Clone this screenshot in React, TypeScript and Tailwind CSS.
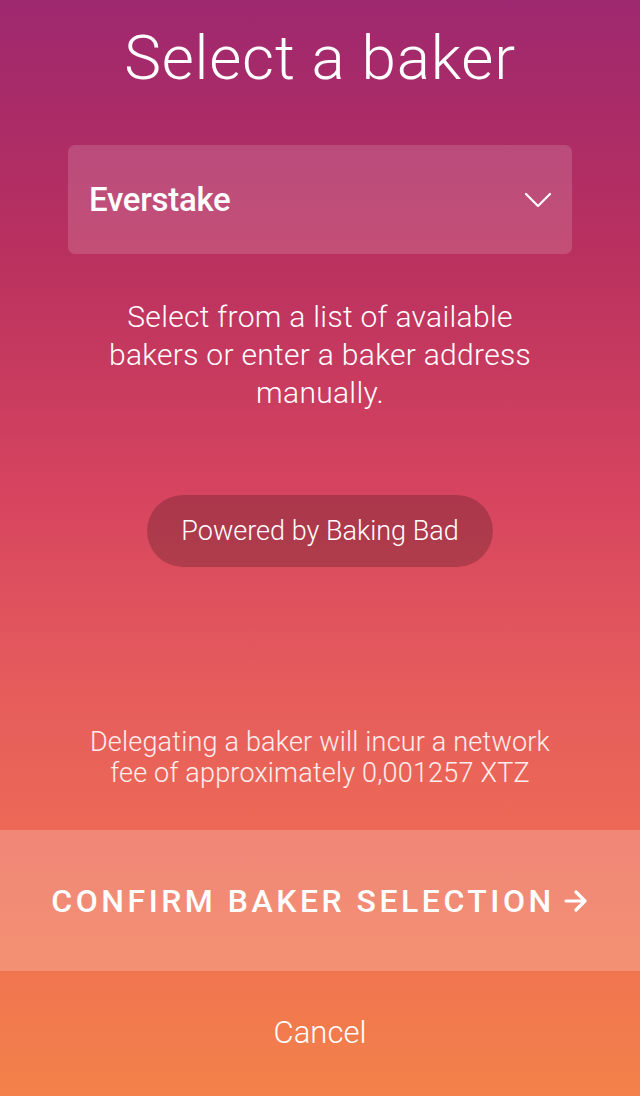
import React from "react";

export default function App() {
  return (
    <div
      className="w-[640px] h-[1096px] flex flex-col text-white bg-[linear-gradient(180deg,#9e286f_0%,#b8305f_22%,#d6445f_45%,#e55b5c_62%,#ee6b55_78%,#f3814a_100%)]"
      style={{ fontFamily: "Roboto, 'Noto Sans', sans-serif" }}
    >
      <h1 className="mt-[22px] text-center text-[62px] leading-[72px] font-light tracking-[0.8px]">
        Select a baker
      </h1>
      <div className="mt-[51px] mx-[68px] h-[109px] rounded-[7px] bg-white/15 flex items-center justify-between pl-[21px] pr-[20px]">
        <span className="text-[33px] font-medium tracking-[-0.3px]">Everstake</span>
        <svg width="28" height="18" viewBox="0 0 28 18" fill="none">
          <path d="M2 3l12 12 12-12" stroke="white" strokeWidth="2.2" strokeLinecap="round" strokeLinejoin="round" />
        </svg>
      </div>
      <p className="mt-[44px] text-center text-[30px] leading-[38px] font-light tracking-[0.3px]">
        Select from a list of available
        <br />
        bakers or enter a baker address
        <br />
        manually.
      </p>
      <div className="mt-[83px] flex justify-center">
        <div className="w-[346px] h-[72px] rounded-full bg-black/20 flex items-center justify-center text-[27px] font-light">
          Powered by Baking Bad
        </div>
      </div>
      <p className="mt-[160px] text-center text-[27px] leading-[31px] font-light text-white/90 tracking-[0.2px]">
        Delegating a baker will incur a network
        <br />
        fee of approximately 0,001257 XTZ
      </p>
      <div className="mt-[41px] h-[141px] bg-white/20 flex items-center justify-center text-[32px] font-medium tracking-[3.5px]">
        CONFIRM BAKER SELECTION
        <svg className="ml-[8px]" width="26" height="24" viewBox="0 0 26 24" fill="none">
          <path d="M3 12h19M13 3l9 9-9 9" stroke="white" strokeWidth="3.2" strokeLinecap="round" strokeLinejoin="round" />
        </svg>
      </div>
      <div className="flex-1 flex items-center justify-center text-[31px] font-light">
        Cancel
      </div>
    </div>
  );
}
